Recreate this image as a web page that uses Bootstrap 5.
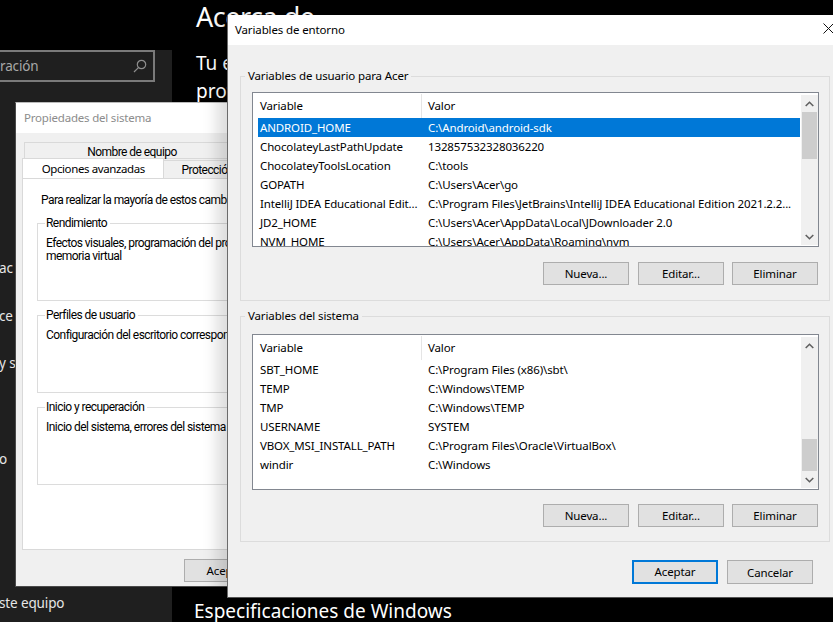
<!DOCTYPE html>
<html lang="es">
<head>
<meta charset="utf-8">
<title>Variables de entorno</title>
<link href="https://cdn.jsdelivr.net/npm/bootstrap@5.3.0/dist/css/bootstrap.min.css" rel="stylesheet">
<style>
html,body{height:100%;margin:0;overflow:hidden}
body{background:#000;font-family:"Noto Sans","Open Sans",sans-serif;font-size:11.5px;letter-spacing:-.13px;color:#000}
.desk{width:833px;height:622px;position:relative;overflow:hidden;background:#000}
.side{width:172px;height:622px;background:#1f1f1f;color:#e6e6e6}
.searchbox{width:158px;height:32px;margin-top:50px;margin-left:-3px;border:2px solid #7a7a7a;color:#a8a8a8;padding:0 6px 0 0;font-size:13.5px;overflow:hidden}
.searchbox span{margin-left:1px}
.sideitem{position:absolute;left:-1px;line-height:20px;white-space:nowrap}
.pagetxt{position:absolute;left:196px;color:#fff;white-space:nowrap;line-height:1.2;letter-spacing:0}
.win{position:absolute;background:#f0f0f0;overflow:hidden}
.winback{left:15px;top:102px;width:300px;height:485px;border:1px solid #4a4a4a;border-top-color:#bbb}
.winfront{left:227px;top:15px;width:606px;height:583px;border-left:1px solid #6b6b6b;border-bottom:1px solid #555;box-shadow:-10px 0 14px rgba(0,0,0,.14)}
.wintitle{background:#fff;height:30px;padding-left:7px;line-height:30px}
.winback .wintitle{color:#8c8c8c;padding-left:8px;letter-spacing:-.2px}
.tab-a,.tab-b,.tab-c{border:1px solid #d9d9d9;text-align:center;white-space:nowrap}
.rbt{font-family:Roboto,"Noto Sans",sans-serif;font-size:12px;letter-spacing:-.55px}
.tab-a{width:216px;height:17px;margin:9px 0 0 8px;line-height:18px;background:#f0f0f0}
.tab-b{width:143px;height:20px;margin:-1px 0 0 6px;background:#fff;border-bottom:0;line-height:19px;position:relative;z-index:1;letter-spacing:-.4px}
.tab-c{width:150px;height:19px;margin-top:1px;border-left:0;line-height:19px;background:#f0f0f0;text-align:left;padding-left:17px}
.panel{margin:-1px 0 0 6px;width:400px;height:372px;background:#fff;border:1px solid #d9d9d9;padding:0 14px}
.lead-txt{margin:13px 0 0 4px;line-height:16px;white-space:nowrap}
.gbox{border:1px solid #dcdcdc;margin:0;padding:0 0 0 9px;white-space:nowrap}
.gbox legend{float:none;width:auto;font-size:11.5px;line-height:16px;margin:0 0 0 -1px;padding:0 3px 0 1px}
.back-g{height:86px;margin-bottom:6px;padding-left:8px}
.back-g legend{font-size:12px}
.back-g p{margin:6px 0 0;line-height:13px}
.g1{margin-top:7px}
.front-g{margin:0 3px 0 12px;padding:0 0 0 11px;height:233px}
.front-g legend{margin-left:-7px;padding:0 3px}
.front-first{margin-top:23px}
.front-second{margin-top:7px;height:234px}
.vlist{width:567px;height:155px;border:1px solid #828790;background:#fff;margin-top:8px;padding:1px 0 0 1px;overflow:hidden}
.front-second .vlist{margin-top:10px;height:156px}
.cols{width:546px;flex:none;overflow:hidden;padding-left:4px}
.headrow{height:24px;line-height:23px;display:flex}
.vrow{height:19px;line-height:19px;display:flex;white-space:nowrap}
.c1{width:163px;padding-left:2px;flex:none;overflow:hidden}
.c2{padding-left:7px;flex:none}
.headrow .c2{border-left:1px solid #e5e5e5;padding-left:6px}
.vrow.sel{background:#0078d7;color:#fff}
.sbar{width:17px;flex:none;background:#f0f0f0;margin:1px 0 1px 1px;display:flex;flex-direction:column;align-items:center}
.sarrow{height:17px;width:15px;display:flex;align-items:center;justify-content:center;flex:none}
.thumb{background:#cdcdcd;width:15px;flex:none}
.t1{height:47px}
.t2{height:32px}
.spc{flex:1 1 auto}
.winbtn.btn{--bs-btn-padding-y:0;--bs-btn-padding-x:0;--bs-btn-font-size:11.5px;--bs-btn-line-height:21px;--bs-btn-border-radius:0;--bs-btn-bg:#e1e1e1;--bs-btn-border-color:#adadad;--bs-btn-color:#000;width:86px;height:23px;font-family:inherit;letter-spacing:inherit}
.winbtn.prim{border:2px solid #0078d7;line-height:20px;height:24px}
.btnrow{margin-top:15px}
.front-second .btnrow{margin-top:14px}
.foot{padding-right:20px;margin-top:18px}
.foot .winbtn.btn{height:24px}
.closex{position:absolute;right:-1px;top:8px}
.backbtn{margin:9px 0 0 168px}
.side-items{color:#e6e6e6;font-size:13.5px}
.side-a{top:258px}
.side-b{top:306px}
.side-c{top:353px}
.side-d{top:449px}
.side-e{top:593px}
.pt1{top:1px;font-size:27px;letter-spacing:-.5px}
.pt2{top:52px;font-size:19px}
.pt3{top:80px;font-size:19px}
.pt4{top:600px;left:194px;font-size:19px}
.bt-a{margin-left:291px}
.bt-b{margin-left:9px}
.bt-c{margin-left:8px}
.cancel{margin-left:9px}
</style>
</head>
<body>
<div class="desk">
  <div class="side">
    <div class="searchbox d-flex align-items-center justify-content-between">
      <span>ración</span>
      <svg width="14" height="14" viewBox="0 0 14 14" fill="none" stroke="#8e8e8e" stroke-width="1.2"><circle cx="8.5" cy="5.5" r="4.2"/><path d="M5.4 8.6 1 13"/></svg>
    </div>
  </div>
  <div class="side-items">
    <span class="sideitem side-a">ac</span>
    <span class="sideitem side-b">ce</span>
    <span class="sideitem side-c">y su</span>
    <span class="sideitem side-d">o</span>
    <span class="sideitem side-e">ste equipo</span>
  </div>
  <div class="pagetxt pt1">Acerca de</div>
  <div class="pagetxt pt2">Tu equipo está</div>
  <div class="pagetxt pt3">protegido</div>
  <div class="pagetxt pt4">Especificaciones de Windows</div>

  <div class="win winback">
    <div class="wintitle">Propiedades del sistema</div>
    <div class="tab-a rbt">Nombre de equipo</div>
    <div class="d-flex">
      <div class="tab-b">Opciones avanzadas</div>
      <div class="tab-c rbt">Protección del sistema</div>
    </div>
    <div class="panel rbt">
      <div class="lead-txt">Para realizar la mayoría de estos cambios</div>
      <fieldset class="gbox back-g g1"><legend>Rendimiento</legend><p>Efectos visuales, programación del procesador<br>memoria virtual</p></fieldset>
      <fieldset class="gbox back-g"><legend>Perfiles de usuario</legend><p>Configuración del escritorio correspondiente</p></fieldset>
      <fieldset class="gbox back-g"><legend>Inicio y recuperación</legend><p>Inicio del sistema, errores del sistema e</p></fieldset>
    </div>
    <button type="button" class="btn winbtn backbtn">Aceptar</button>
  </div>

  <div class="win winfront">
    <div class="wintitle">Variables de entorno</div>
    <svg class="closex" width="11" height="11" viewBox="0 0 11 11" stroke="#111" stroke-width="1"><path d="M.5.5l10 10M10.5.5l-10 10"/></svg>
    <fieldset class="gbox front-g front-first"><legend>Variables de usuario para Acer</legend>
      <div class="vlist d-flex">
        <div class="cols">
          <div class="headrow"><div class="c1">Variable</div><div class="c2">Valor</div></div>
          <div class="vrow sel"><div class="c1">ANDROID_HOME</div><div class="c2">C:\Android\android-sdk</div></div>
          <div class="vrow"><div class="c1">ChocolateyLastPathUpdate</div><div class="c2">132857532328036220</div></div>
          <div class="vrow"><div class="c1">ChocolateyToolsLocation</div><div class="c2">C:\tools</div></div>
          <div class="vrow"><div class="c1">GOPATH</div><div class="c2">C:\Users\Acer\go</div></div>
          <div class="vrow"><div class="c1">IntelliJ IDEA Educational Edit...</div><div class="c2">C:\Program Files\JetBrains\IntelliJ IDEA Educational Edition 2021.2.2...</div></div>
          <div class="vrow"><div class="c1">JD2_HOME</div><div class="c2">C:\Users\Acer\AppData\Local\JDownloader 2.0</div></div>
          <div class="vrow"><div class="c1">NVM_HOME</div><div class="c2">C:\Users\Acer\AppData\Roaming\nvm</div></div>
        </div>
        <div class="sbar">
          <div class="sarrow"><svg width="9" height="6" viewBox="0 0 9 6" fill="none" stroke="#606060" stroke-width="1.6"><path d="M.7 5 4.5 1.3 8.3 5"/></svg></div>
          <div class="thumb t1"></div><div class="spc"></div>
          <div class="sarrow"><svg width="9" height="6" viewBox="0 0 9 6" fill="none" stroke="#606060" stroke-width="1.6"><path d="M.7 1 4.5 4.7 8.3 1"/></svg></div>
        </div>
      </div>
      <div class="d-flex btnrow">
        <button type="button" class="btn winbtn bt-a">Nueva...</button>
        <button type="button" class="btn winbtn bt-b">Editar...</button>
        <button type="button" class="btn winbtn bt-c">Eliminar</button>
      </div>
    </fieldset>
    <fieldset class="gbox front-g front-second"><legend>Variables del sistema</legend>
      <div class="vlist d-flex">
        <div class="cols">
          <div class="headrow"><div class="c1">Variable</div><div class="c2">Valor</div></div>
          <div class="vrow"><div class="c1">SBT_HOME</div><div class="c2">C:\Program Files (x86)\sbt\</div></div>
          <div class="vrow"><div class="c1">TEMP</div><div class="c2">C:\Windows\TEMP</div></div>
          <div class="vrow"><div class="c1">TMP</div><div class="c2">C:\Windows\TEMP</div></div>
          <div class="vrow"><div class="c1">USERNAME</div><div class="c2">SYSTEM</div></div>
          <div class="vrow"><div class="c1">VBOX_MSI_INSTALL_PATH</div><div class="c2">C:\Program Files\Oracle\VirtualBox\</div></div>
          <div class="vrow"><div class="c1">windir</div><div class="c2">C:\Windows</div></div>
        </div>
        <div class="sbar">
          <div class="sarrow"><svg width="9" height="6" viewBox="0 0 9 6" fill="none" stroke="#606060" stroke-width="1.6"><path d="M.7 5 4.5 1.3 8.3 5"/></svg></div>
          <div class="spc"></div><div class="thumb t2"></div>
          <div class="sarrow"><svg width="9" height="6" viewBox="0 0 9 6" fill="none" stroke="#606060" stroke-width="1.6"><path d="M.7 1 4.5 4.7 8.3 1"/></svg></div>
        </div>
      </div>
      <div class="d-flex btnrow">
        <button type="button" class="btn winbtn bt-a">Nueva...</button>
        <button type="button" class="btn winbtn bt-b">Editar...</button>
        <button type="button" class="btn winbtn bt-c">Eliminar</button>
      </div>
    </fieldset>
    <div class="d-flex justify-content-end foot">
      <button type="button" class="btn winbtn prim">Aceptar</button>
      <button type="button" class="btn winbtn cancel">Cancelar</button>
    </div>
  </div>
</div>
</body>
</html>
